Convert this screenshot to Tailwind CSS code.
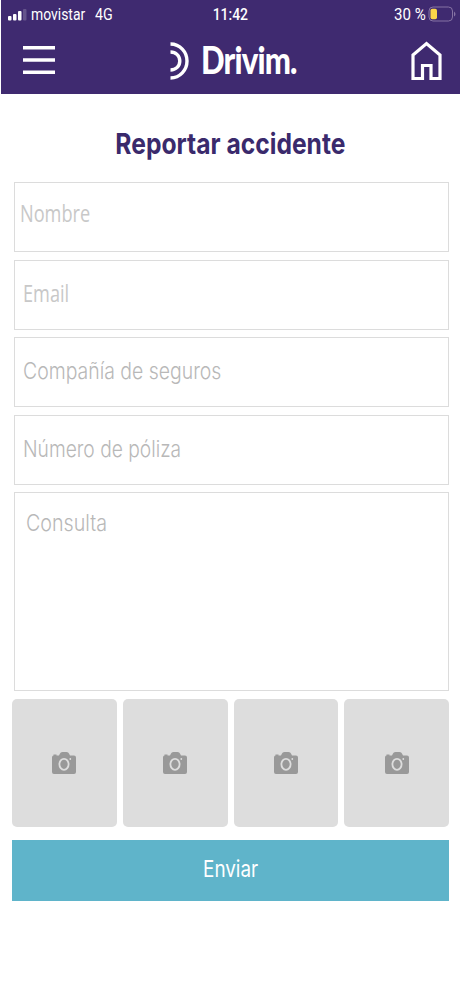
<!DOCTYPE html>
<html lang="es">
<head>
  <meta charset="UTF-8">
  <meta name="viewport" content="width=device-width, initial-scale=1.0">
  <title>Drivim - Reportar accidente</title>
  <script src="https://cdn.jsdelivr.net/npm/@tailwindcss/browser@4"></script>
</head>
<body class="bg-white font-['Inter',sans-serif]">
  <!-- Header -->
  <header class="ml-px h-[94px] bg-[#3f2a70] text-white">
    <div class="grid h-7 grid-cols-3 items-center pt-px pr-1 pl-[7px] font-['Roboto',sans-serif] text-base leading-7">
      <div class="flex items-center">
        <svg class="h-3 w-5" viewBox="0 0 20 12" fill="#fff">
          <rect x="0" y="7" width="3.5" height="4.5" rx="1"/>
          <rect x="5" y="5" width="3.5" height="6.5" rx="1"/>
          <rect x="10" y="2" width="3.5" height="9.5" rx="1"/>
          <rect x="15" y="0" width="3.5" height="11.5" rx="1" opacity=".2"/>
        </svg>
        <span class="ml-[3px] w-[64px] origin-left scale-x-[.87] whitespace-nowrap">movistar</span>
        <span class="origin-left scale-x-[.89]">4G</span>
      </div>
      <div class="pr-1 text-center font-medium"><span class="inline-block scale-x-[.87]">11:42</span></div>
      <div class="flex items-center justify-end">
        <span class="origin-right scale-x-[.94] whitespace-nowrap">30 %</span>
        <svg class="mb-0.5 ml-[2px] h-4 w-7 shrink-0" viewBox="0 0 28 16">
          <rect x="1" y="1" width="23.5" height="14" rx="4" fill="none" stroke="#8673a4"/>
          <rect x="2.5" y="2.7" width="6.5" height="10.6" rx="1.8" fill="#fbd549"/>
          <path d="M26 5.5v5q1.5-1 1.5-2.5T26 5.5" fill="#8673a4"/>
        </svg>
      </div>
    </div>
    <div class="flex h-[66px] items-center pr-[18px] pl-[22px]">
      <svg class="mb-0.5 h-7 w-8" viewBox="0 0 32 28" fill="#fff">
        <path d="M0 0h32v3.500H0zM0 12.300h32v3.500H0zM0 24.500h32V28H0z"/>
      </svg>
      <div class="ml-[115px] flex items-center">
        <svg class="h-10 w-5" viewBox="0 0 20 40" fill="none" stroke="#fff" stroke-width="3.400">
          <path d="M.5 3C10 3 17 11 17 20S10 37 .5 37"/>
          <path d="M.5 11C6 11 9.800 15 9.800 20S6 29 .5 29"/>
        </svg>
        <div class="w-[97px] pb-0.5 pl-[11px] font-['Lato',sans-serif] text-[37px] leading-10 font-black tracking-[-1px] whitespace-nowrap"><span class="inline-block origin-left scale-x-[.84]">Drivim.</span></div>
      </div>
      <svg class="ml-auto h-10 w-[31px]" viewBox="0 0 31 40" fill="none" stroke="#fff" stroke-width="3.200">
        <path d="M2 37.500V14L15.500 2.500 29 14v23.500h-9V24.500h-8.500v13z"/>
      </svg>
    </div>
  </header>

  <!-- Report form -->
  <main class="pr-[11px] pl-3 text-[23px] font-light text-[#b8b8b8]">
    <h1 class="flex h-[88px] items-center justify-center pt-[11px] text-[29px] font-bold text-[#3a2a6c]"><span class="scale-x-[.85] whitespace-nowrap">Reportar accidente</span></h1>
    <div class="ml-[1.5px] flex flex-col gap-[7.6px]">
      <div class="flex h-[70px] items-center border border-[#dcdcdc] pb-[8px] pl-[5px] font-['Open_Sans',sans-serif] font-normal text-[#c8c8c8]"><span class="origin-left scale-x-[.79]">Nombre</span></div>
      <div class="flex h-[70px] items-center border border-[#dcdcdc] pb-[2px] pl-[8px] font-['Open_Sans',sans-serif] font-normal text-[#c8c8c8]"><span class="origin-left scale-x-[.79]">Email</span></div>
      <div class="flex h-[70px] items-center border border-[#dcdcdc] pb-[2px] pl-[8px]"><span class="origin-left scale-x-[.845]">Compañía de seguros</span></div>
      <div class="flex h-[70px] items-center border border-[#dcdcdc] pb-[2px] pl-[8px]"><span class="origin-left scale-x-[.835]">Número de póliza</span></div>
      <div class="flex h-[198.500px] items-start border border-[#dcdcdc] pt-[13px] pl-[11px]"><span class="origin-left scale-x-[.855]">Consulta</span></div>
    </div>
    <svg class="hidden">
      <symbol id="camera" viewBox="0 0 24 22">
        <path d="M1.500 3.500V2.500h3v1H7C8 1 9 0 10.500 0h4C16 0 17 1 18 3.500h4q2 0 2 2V20q0 2-2 2H2q-2 0-2-2V5.500q0-2 1.500-2z" fill="#999"/>
        <ellipse cx="12" cy="12.300" rx="4.600" ry="5.500" fill="none" stroke="#ddd" stroke-width="1.800"/>
        <circle cx="18.300" cy="7" r=".9" fill="#ddd"/>
      </symbol>
    </svg>
    <div class="mt-2 grid grid-cols-4 gap-[6px]">
      <div class="flex h-32 items-center justify-center rounded-[5px] bg-[#ddd]"><svg class="h-[22px] w-6"><use href="#camera"/></svg></div>
      <div class="flex h-32 items-center justify-center rounded-[5px] bg-[#ddd]"><svg class="h-[22px] w-6"><use href="#camera"/></svg></div>
      <div class="flex h-32 items-center justify-center rounded-[5px] bg-[#ddd]"><svg class="h-[22px] w-6"><use href="#camera"/></svg></div>
      <div class="flex h-32 items-center justify-center rounded-[5px] bg-[#ddd]"><svg class="h-[22px] w-6"><use href="#camera"/></svg></div>
    </div>
    <button class="mt-[13px] flex h-[61px] w-full items-center justify-center bg-[#5fb4ca] pb-0.5 font-normal text-white"><span class="scale-x-[.82]">Enviar</span></button>
  </main>
</body>
</html>
